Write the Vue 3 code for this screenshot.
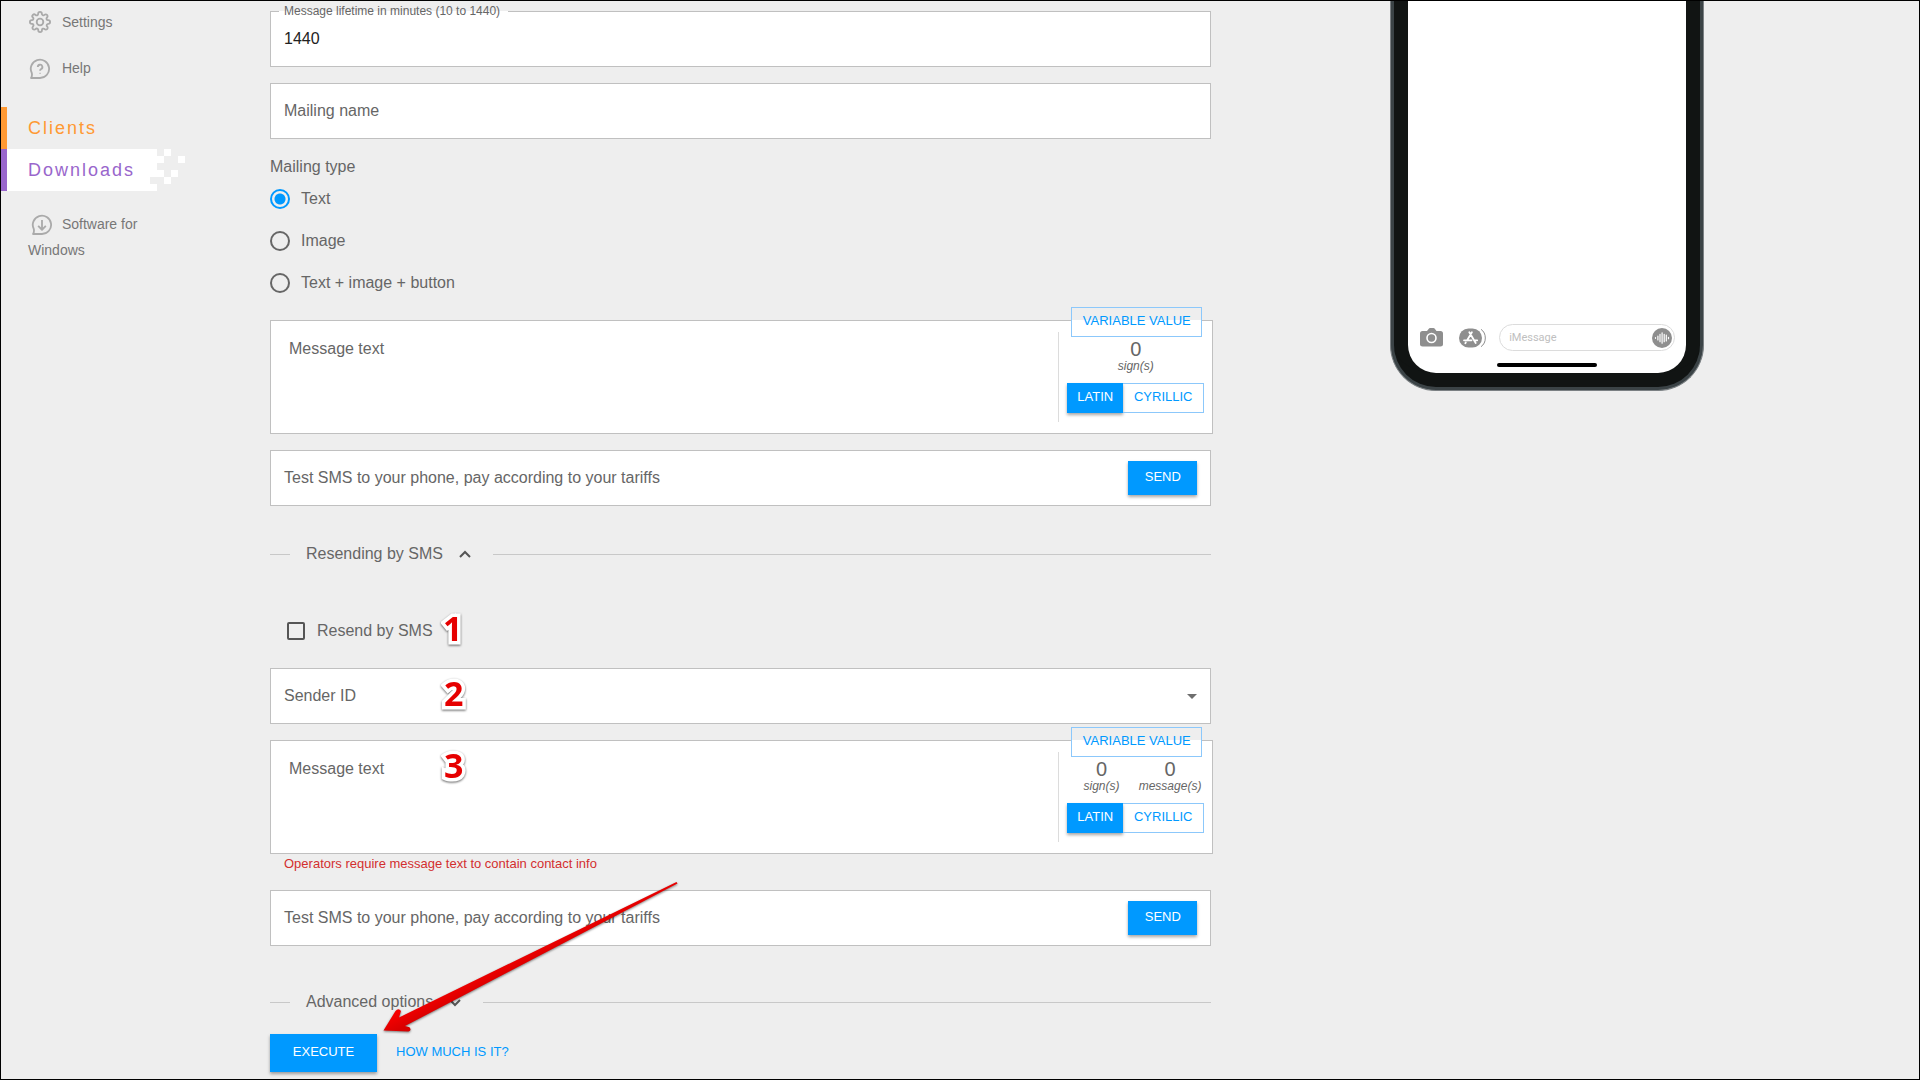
<script setup>
import { ref } from "vue"

const lifetime = ref("1440")
const mailingName = ref("")
const mailingType = ref("text")
const resend = ref(false)
const sender = ref("")
const message = ref("")
const smsMessage = ref("")
const testPhone = ref("")
const smsTestPhone = ref("")
const alphabet = ref("latin")
const smsAlphabet = ref("latin")

const mailingTypes = [
    { value: "text", label: "Text" },
    { value: "image", label: "Image" },
    { value: "mixed", label: "Text + image + button" },
]
</script>

<template>
    <div class="page">
        <!-- SIDEBAR -->
        <nav class="sidebar">
            <a href="#" class="nav-item">
                <svg class="nav-icon" viewBox="0 0 24 24">
                    <circle cx="12" cy="12" r="3.6" />
                    <path d="M19.4 15a1.65 1.65 0 0 0 .33 1.82l.06.06a2 2 0 1 1-2.83 2.83l-.06-.06a1.65 1.65 0 0 0-2.8 1.17V21a2 2 0 0 1-4 0v-.09a1.65 1.65 0 0 0-2.9-1.2l-.06.06a2 2 0 1 1-2.83-2.83l.06-.06A1.65 1.65 0 0 0 3.1 14H3a2 2 0 0 1 0-4h.09a1.65 1.65 0 0 0 1.2-2.9l-.06-.06a2 2 0 1 1 2.83-2.83l.06.06A1.65 1.65 0 0 0 10 3.1V3a2 2 0 0 1 4 0v.09a1.65 1.65 0 0 0 2.8 1.2l.06-.06a2 2 0 1 1 2.83 2.83l-.06.06A1.65 1.65 0 0 0 20.9 10H21a2 2 0 0 1 0 4h-.09a1.65 1.65 0 0 0-1.5 1z" />
                </svg>
                Settings
            </a>
            <a href="#" class="nav-item">
                <svg class="nav-icon" viewBox="0 0 24 24">
                    <path d="M2.2 21.8h9.8a10 10 0 1 0-9-5.5q.8 3.2-.8 5.5z" />
                    <path d="M9.6 9.8a2.5 2.5 0 1 1 3.7 2.2q-1.2.7-1.2 2" />
                    <path d="M12.1 16.2v.8" />
                </svg>
                Help
            </a>

            <a href="#" class="section clients">Clients</a>
            <a href="#" class="section downloads">
                <span>Downloads</span>
                <svg class="pixels" viewBox="0 0 35 42" shape-rendering="crispEdges">
                    <path d="M0 0h7v7h7v7h-7v7h7v7h-14zM0 35h7v7h-7zM14 0h7v7h-7zM28 7h7v7h-7zM21 21h7v7h-7zM14 28h7v7h-7z" />
                </svg>
            </a>

            <a href="#" class="nav-item software">
                <svg class="nav-icon" viewBox="0 0 24 24">
                    <path d="M2.2 21.8h9.8a10 10 0 1 0-9-5.5q.8 3.2-.8 5.5z" />
                    <path d="M12 6.5v10.5M7.8 13l4.2 4.2 4.2-4.2" />
                </svg>
                Software for Windows
            </a>
        </nav>

        <!-- FORM -->
        <form class="form" @submit.prevent>
            <div class="field">
                <label for="lifetime" class="floating">Message lifetime in minutes (10 to 1440)</label>
                <input id="lifetime" v-model="lifetime" type="text" />
            </div>

            <div class="field">
                <label v-if="!mailingName" for="mailing-name">Mailing name</label>
                <input id="mailing-name" v-model="mailingName" type="text" />
            </div>

            <fieldset class="types">
                <legend>Mailing type</legend>
                <label v-for="type in mailingTypes" :key="type.value" class="radio">
                    <input v-model="mailingType" type="radio" name="mailing-type" :value="type.value" />
                    {{ type.label }}
                </label>
            </fieldset>

            <div class="message">
                <label v-if="!message" for="message">Message text</label>
                <textarea id="message" v-model="message"></textarea>
                <button type="button" class="variable">VARIABLE VALUE</button>
                <div class="tools">
                    <div class="counters">
                        <div class="counter"><b>0</b><i>sign(s)</i></div>
                    </div>
                    <div class="toggle">
                        <button type="button" :class="{ active: alphabet === 'latin' }" @click="alphabet = 'latin'">LATIN</button>
                        <button type="button" :class="{ active: alphabet === 'cyrillic' }" @click="alphabet = 'cyrillic'">CYRILLIC</button>
                    </div>
                </div>
            </div>

            <div class="field">
                <label v-if="!testPhone" for="test-phone">Test SMS to your phone, pay according to your tariffs</label>
                <input id="test-phone" v-model="testPhone" type="text" />
                <button type="button" class="filled send">SEND</button>
            </div>

            <div class="divider">
                <span>Resending by SMS</span>
                <svg class="chevron" viewBox="0 0 24 24"><path d="M7 15l5-5 5 5" /></svg>
            </div>

            <div class="resend">
                <label class="check">
                    <input v-model="resend" type="checkbox" />
                    Resend by SMS
                </label>
                <span class="mark">1</span>
            </div>

            <div class="field">
                <label v-if="!sender" for="sender">Sender ID</label>
                <select id="sender" v-model="sender">
                    <option value=""></option>
                </select>
                <svg class="arrow-down" viewBox="0 0 10 5"><path d="M0 0h10l-5 5z" /></svg>
                <span class="mark">2</span>
            </div>

            <div class="message">
                <label v-if="!smsMessage" for="sms-message">Message text</label>
                <textarea id="sms-message" v-model="smsMessage"></textarea>
                <button type="button" class="variable">VARIABLE VALUE</button>
                <div class="tools">
                    <div class="counters">
                        <div class="counter"><b>0</b><i>sign(s)</i></div>
                        <div class="counter"><b>0</b><i>message(s)</i></div>
                    </div>
                    <div class="toggle">
                        <button type="button" :class="{ active: smsAlphabet === 'latin' }" @click="smsAlphabet = 'latin'">LATIN</button>
                        <button type="button" :class="{ active: smsAlphabet === 'cyrillic' }" @click="smsAlphabet = 'cyrillic'">CYRILLIC</button>
                    </div>
                </div>
                <span class="mark">3</span>
            </div>
            <p class="error">Operators require message text to contain contact info</p>

            <div class="field">
                <label v-if="!smsTestPhone" for="sms-test-phone">Test SMS to your phone, pay according to your tariffs</label>
                <input id="sms-test-phone" v-model="smsTestPhone" type="text" />
                <button type="button" class="filled send">SEND</button>
            </div>

            <div class="divider advanced">
                <span>Advanced options</span>
                <svg class="chevron" viewBox="0 0 24 24"><path d="M7 10l5 5 5-5" /></svg>
            </div>

            <div class="actions">
                <button type="submit" class="filled execute">EXECUTE</button>
                <button type="button" class="link">HOW MUCH IS IT?</button>
                <svg class="pointer" viewBox="0 0 300 156">
                    <defs>
                        <linearGradient id="red" x1="145" y1="70" x2="152" y2="84" gradientUnits="userSpaceOnUse">
                            <stop offset="0" stop-color="#f60000" />
                            <stop offset="1" stop-color="#d80000" />
                        </linearGradient>
                    </defs>
                    <path d="M2.5 151.5L14.5 132q3-3.500 5.500 0l-2 6.500L295.500 3l1 1.500L24 147l4.500 1.200q2.500 3-1 4.300z" />
                </svg>
            </div>
        </form>

        <!-- PHONE PREVIEW -->
        <aside class="preview">
            <div class="phone">
                <div class="bezel">
                    <div class="screen">
                        <div class="chat-bar">
                            <svg class="camera" viewBox="0 0 23 19">
                                <path fill="#8e8e8e" d="M2.5 3h4.500l1.800-2.300Q9.300 0 10 0h3.500q.8 0 1.300.7L16.500 3h4Q23 3 23 5.500v11q0 2-2.500 2h-18Q0 18.500 0 16.500v-11Q0 3 2.500 3z" />
                                <circle cx="11.5" cy="10" r="4.5" fill="none" stroke="#fff" stroke-width="1.6" />
                            </svg>
                            <svg class="apps" viewBox="0 0 27 20">
                                <path fill="none" stroke="#8e8e8e" d="M22 1.300q4.300 3 4.300 8.700t-4.300 8.700" />
                                <rect width="23" height="19" y=".5" rx="9.5" fill="#8e8e8e" />
                                <path fill="none" stroke="#fff" stroke-width="1.8" stroke-linecap="round" d="M10.300 4.200L16.700 15M12.900 4.200L8 12.500M5 12.300h7.500M15.500 12.300h2.700M6.800 14.500l-.5.800" />
                            </svg>
                            <div class="imessage">
                                <input type="text" aria-label="iMessage" placeholder="iMessage" />
                                <svg class="voice" viewBox="0 0 20 20">
                                    <circle cx="10" cy="10" r="10" fill="#8e8e8e" />
                                    <path stroke="#fff" stroke-width="1.2" stroke-linecap="round" d="M3.500 9.700v.6M5.900 8v4M8 6.300v7.400M10.100 4.800v10.400M12.200 6.300v7.400M14.300 7v6M16.500 9.300v1.400" />
                                </svg>
                            </div>
                        </div>
                        <div class="home"></div>
                    </div>
                </div>
            </div>
        </aside>
    </div>
</template>

<style>
body {
    margin: 0;
    background: #eeeeee;
}
</style>

<style scoped>
.page {
    box-sizing: border-box;
    min-height: 100vh;
    border: 1px solid #000;
    background: #eeeeee;
    display: grid;
    grid-template-columns: 269px minmax(0, 4fr) minmax(0, 3fr);
    font-family: "Liberation Sans", Arial, sans-serif;
    font-size: 16px;
    line-height: 20px;
    color: #666;
}

.page * {
    box-sizing: border-box;
}

button,
input,
select,
textarea {
    font: inherit;
    color: inherit;
    margin: 0;
    border-radius: 0;
}

button {
    font-size: 13px;
    color: #0099ff;
    background: transparent;
    border: none;
    padding: 0 0 2px;
    cursor: pointer;
}

/* SIDEBAR */
.sidebar {
    display: flex;
    flex-direction: column;
    align-items: flex-start;
    padding-top: 8px;
}

.nav-item {
    width: 150px;
    padding-left: 27px;
    margin-bottom: 20px;
    font-size: 14px;
    line-height: 26px;
    color: #777;
    text-decoration: none;
}

.nav-icon {
    width: 22px;
    height: 22px;
    margin: 0 7px 2px 1px;
    vertical-align: middle;
    fill: none;
    stroke: #aaa;
    stroke-width: 2;
    stroke-linejoin: round;
}

.section {
    display: flex;
    align-items: center;
    height: 42px;
    font-size: 18px;
    letter-spacing: 2px;
    text-decoration: none;
}

.clients {
    margin-top: 5px;
    padding-left: 21px;
    border-left: 6px solid #ff9933;
    color: #ff9933;
}

.downloads {
    border-left: 6px solid #9966cc;
    color: #9966cc;
}

.downloads span {
    width: 143px;
    padding-left: 21px;
    line-height: 42px;
    background: #fff;
}

.pixels {
    width: 35px;
    height: 42px;
    fill: #fff;
}

.software {
    margin-top: 20px;
}

.software .nav-icon {
    margin: 0 5px 0 3px;
}

/* FORM */
.form {
    display: flex;
    flex-direction: column;
    padding: 10px 1px 7px 0;
}

.field {
    position: relative;
    display: flex;
    align-items: center;
    height: 56px;
    margin-bottom: 16px;
    border: 1px solid #c0c0c0;
    background: #fff;
}

.field input,
.field select {
    flex: 1;
    min-width: 0;
    height: 54px;
    padding: 0 13px;
    border: none;
    outline: none;
    background: transparent;
    color: #222;
    appearance: none;
}

.field label {
    position: absolute;
    left: 13px;
    pointer-events: none;
}

.field .floating {
    top: -11px;
    left: 8px;
    padding: 0 8px 0 5px;
    font-size: 12px;
    background: linear-gradient(#eeeeee 50%, #fff 50%);
}

.types {
    margin: 0 0 16px;
    padding: 0;
    border: none;
}

.types legend {
    padding: 0;
    line-height: 23px;
}

.radio {
    display: flex;
    align-items: center;
    gap: 11px;
    height: 42px;
}

.radio input {
    appearance: none;
    width: 20px;
    height: 20px;
    border: 2px solid #666;
    border-radius: 50%;
}

.radio input:checked {
    border-color: #0099ff;
    background: radial-gradient(circle, #0099ff 5px, transparent 6px);
}

.message {
    position: relative;
    display: flex;
    height: 114px;
    margin: 0 -2px 16px 0;
    border: 1px solid #c0c0c0;
    background: #fff;
}

.message label {
    position: absolute;
    top: 18px;
    left: 18px;
    pointer-events: none;
}

.message textarea {
    flex: 1;
    padding: 18px;
    border: none;
    outline: none;
    resize: none;
    background: transparent;
}

.variable {
    position: absolute;
    top: -14px;
    right: 10px;
    width: 131px;
    height: 30px;
    border: 1px solid #8cc8fb;
    background: linear-gradient(#eeeeee 12px, #fff 12px);
}

.tools {
    width: 154px;
    margin: 11px 0;
    padding: 8px 8px 0;
    border-left: 1px solid #dcdcdc;
}

.counters {
    display: flex;
    text-align: center;
}

.counter {
    flex: 1;
    display: flex;
    flex-direction: column;
}

.counter b {
    font-size: 20px;
    line-height: 18px;
    font-weight: 400;
}

.counter i {
    font-size: 12px;
    line-height: 16px;
}

.toggle {
    display: flex;
    margin-top: 9px;
}

.toggle button {
    height: 30px;
    padding: 0 9px 2px;
    border: 1px solid #8cc8fb;
    border-left: none;
}

.toggle button:last-child {
    flex: 1;
}

.toggle .active,
.filled {
    border: none;
    background: #0099ff;
    color: #fff;
    box-shadow: 0 2px 3px rgba(0, 0, 0, 0.35);
}

.toggle .active {
    padding: 0 10px 2px;
}

.send {
    width: 69px;
    height: 34px;
    margin-right: 13px;
}

.divider {
    display: flex;
    align-items: center;
    height: 24px;
    margin: 20px 0 45px;
}

.divider::before,
.divider::after {
    content: "";
    width: 20px;
    height: 1px;
    background: #c8c8c8;
}

.divider::after {
    flex: 1;
}

.divider span {
    margin: 0 10px 0 16px;
}

.chevron {
    width: 24px;
    height: 24px;
    margin-right: 16px;
    fill: none;
    stroke: #555;
    stroke-width: 2;
}

.resend {
    position: relative;
    display: flex;
    align-items: center;
    height: 40px;
    margin-bottom: 17px;
    padding-left: 17px;
}

.check {
    display: flex;
    align-items: center;
    gap: 12px;
}

.check input {
    appearance: none;
    width: 18px;
    height: 18px;
    border: 2px solid #555;
    border-radius: 2px;
}

.check input:checked {
    border-color: #0099ff;
    background: #0099ff;
}

.arrow-down {
    position: absolute;
    right: 13px;
    width: 10px;
    height: 5px;
    fill: #6e6e6e;
    pointer-events: none;
}

.error {
    margin: -16px 0 17px;
    padding-left: 14px;
    font-size: 13px;
    line-height: 19px;
    color: #d32f2f;
}

.advanced {
    margin: 28px 0 20px;
}

.actions {
    position: relative;
    display: flex;
    align-items: center;
    gap: 19px;
}

.execute {
    width: 107px;
    height: 38px;
}

/* ANNOTATIONS */
.mark {
    position: absolute;
    top: -3px;
    left: 173px;
    font-family: "Open Sans", sans-serif;
    font-size: 34px;
    font-weight: 700;
    line-height: 54px;
    color: #e60000;
    -webkit-text-stroke: 7px #fff;
    paint-order: stroke fill;
    stroke-linejoin: round;
    filter: drop-shadow(0 1px 1px rgba(0, 0, 0, 0.6));
    pointer-events: none;
}

.resend .mark {
    top: -10px;
}

.pointer {
    position: absolute;
    left: 111px;
    bottom: 37px;
    width: 300px;
    height: 156px;
    fill: url(#red);
    filter: drop-shadow(0 1px 1px rgba(0, 0, 0, 0.5));
    pointer-events: none;
}

/* PHONE */
.preview {
    display: flex;
    justify-content: center;
    align-items: flex-start;
    padding-right: 37px;
}

.phone {
    width: 314px;
    padding: 0 3px 3px;
    border: 1px solid #7b8083;
    border-top: none;
    border-radius: 0 0 46px 46px;
    background: #3b4346;
}

.bezel {
    padding: 0 14px;
    border-bottom: 14px solid #111413;
    border-radius: 0 0 42px 42px;
    background: #111413;
}

.screen {
    display: flex;
    flex-direction: column;
    justify-content: flex-end;
    align-items: center;
    height: 372px;
    padding-bottom: 6px;
    border-radius: 0 0 28px 28px;
    background: #fff;
}

.chat-bar {
    align-self: stretch;
    display: flex;
    align-items: center;
    padding: 0 11px 0 12px;
}

.camera {
    width: 23px;
    height: 19px;
}

.apps {
    width: 27px;
    height: 20px;
    margin: 0 13px 0 16px;
}

.imessage {
    flex: 1;
    min-width: 0;
    display: flex;
    align-items: center;
    height: 27px;
    padding: 0 2px 0 9px;
    border: 1px solid #dcdcdc;
    border-radius: 14px;
}

.imessage input {
    flex: 1;
    min-width: 0;
    padding: 0;
    border: none;
    outline: none;
    background: transparent;
    font-family: Roboto, sans-serif;
    font-size: 11px;
}

.imessage input::placeholder {
    color: #c0c0c0;
}

.voice {
    width: 20px;
    height: 20px;
}

.home {
    width: 100px;
    height: 4px;
    margin-top: 12px;
    border-radius: 2px;
    background: #000;
}
</style>
